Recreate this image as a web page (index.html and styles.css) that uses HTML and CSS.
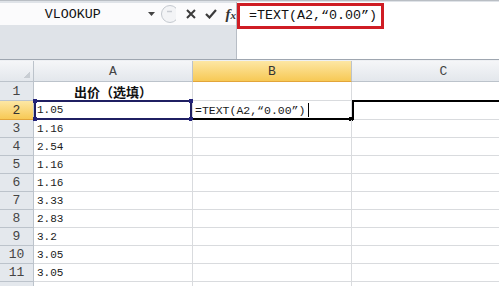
FILE: index.html
```html
<!doctype html>
<html lang="zh-CN">
  <head>
    <meta charset="UTF-8" />
    <meta name="viewport" content="width=device-width, initial-scale=1.0" />
    <title>TEXT 函数</title>
    <link rel="stylesheet" href="styles.css">
  </head>

  <body>
    <div class="window">
      <!-- Formula bar -->
      <div class="formula-bar">
        <div class="formula-left">
          <div class="name-row">
            <div class="name-box">VLOOKUP</div>
            <svg class="drop" width="8" height="5" viewBox="0 0 8 5"><path d="M0 0h7L3.5 4z" fill="#444"/></svg>
            <svg class="splitter" width="16" height="20" viewBox="0 0 16 20">
              <circle cx="10" cy="10" r="8.5" fill="#f3f4f6" stroke="#c3c8ce"/>
              <path d="M7 7.5h5" stroke="#c8ccd2" stroke-width="1.5"/>
            </svg>
            <svg class="icon" width="10" height="10" viewBox="0 0 10 10">
              <path d="M1 1l8 8M9 1l-8 8" stroke="#3b3b3b" stroke-width="2"/>
            </svg>
            <svg class="icon check" width="12" height="10" viewBox="0 0 12 10">
              <path d="M1 5l3.5 3.5L11 1" stroke="#3b3b3b" stroke-width="2.2" fill="none"/>
            </svg>
            <span class="fx"><i>f</i><i class="x">x</i></span>
          </div>
        </div>
        <div class="formula-input">
          <span class="formula-mark">=TEXT(A2,“0.00”)</span>
        </div>
      </div>
      <div class="spacer"></div>

      <!-- Sheet -->
      <div class="sheet">
        <div class="ch corner"></div>
        <div class="ch">A</div>
        <div class="ch picked">B</div>
        <div class="ch">C</div>

        <div class="rh">1</div>
        <div class="c title">出价（选填）</div>
        <div class="c"></div>
        <div class="c"></div>

        <div class="rh picked">2</div>
        <div class="c marked">1.05
          <span class="hd tl"></span><span class="hd tr"></span>
          <span class="hd bl"></span><span class="hd br"></span>
        </div>
        <div class="c editing">=TEXT(A2,“0.00”)<span class="caret"></span><span class="hd fill"></span></div>
        <div class="c edge"></div>

        <div class="rh">3</div><div class="c">1.16</div><div class="c"></div><div class="c"></div>
        <div class="rh">4</div><div class="c">2.54</div><div class="c"></div><div class="c"></div>
        <div class="rh">5</div><div class="c">1.16</div><div class="c"></div><div class="c"></div>
        <div class="rh">6</div><div class="c">1.16</div><div class="c"></div><div class="c"></div>
        <div class="rh">7</div><div class="c">3.33</div><div class="c"></div><div class="c"></div>
        <div class="rh">8</div><div class="c">2.83</div><div class="c"></div><div class="c"></div>
        <div class="rh">9</div><div class="c">3.2</div><div class="c"></div><div class="c"></div>
        <div class="rh">10</div><div class="c">3.05</div><div class="c"></div><div class="c"></div>
        <div class="rh">11</div><div class="c">3.05</div><div class="c"></div><div class="c"></div>
        <div class="rh"></div><div class="c"></div><div class="c"></div><div class="c"></div>
      </div>
    </div>
  </body>
</html>
```

FILE: styles.css
```css
body {
  margin: 0;
  background: #fff;
  font-family: "Liberation Mono", "DejaVu Sans Mono", monospace;
  color: #1a1a1a;
}

.window {
  width: 499px;
  height: 286px;
  overflow: hidden;
}

/* formula bar */
.formula-bar {
  display: flex;
  height: 58px;
  border-top: 1px solid #b9bec4;
  border-bottom: 1px solid #9ea6b0;
  background: #dfe3e8;
}

.formula-left {
  width: 236px;
  padding-top: 2px;
}

.name-row {
  display: flex;
  align-items: center;
  height: 22px;
  background: #fbfbfc;
}

.name-box {
  width: 146px;
  text-align: center;
  font-size: 13.33px;
  color: #111;
}

.drop {
  margin: 1px 0 0 2px;
}

.splitter {
  margin-left: 4px;
}

.icon {
  margin-left: 10px;
}

.check {
  margin-left: 9px;
}

.fx {
  margin-left: 9px;
  font-family: "Liberation Serif", serif;
  font-weight: bold;
  font-size: 15px;
  color: #333;
}

.fx .x {
  font-size: 11px;
}

.formula-input {
  flex: 1;
  margin-top: 1px;
  padding-top: 1px;
  background: #fff;
  border-left: 1px solid #b7bdc5;
}

.formula-mark {
  display: inline-block;
  height: 20px;
  line-height: 20px;
  padding: 0 4px 0 9px;
  border: 3px solid #cf1d24;
  font-size: 13.33px;
  color: #111;
}

.spacer {
  height: 1px;
  background: #eef0f3;
}

/* sheet grid */
.sheet {
  display: grid;
  grid-template-columns: 34px 159px 159px 184px;
  grid-template-rows: 21px 19px 19px;
  grid-auto-rows: 18px;
  width: 536px;
}

.sheet > div {
  box-sizing: border-box;
  display: flex;
  align-items: center;
  border-right: 1px solid #d9dbde;
  border-bottom: 1px solid #d9dbde;
}

.sheet .ch,
.sheet .rh {
  justify-content: center;
  font-size: 13px;
  color: #444;
  border-color: #bcc3cb;
}

.ch {
  background: linear-gradient(#f5f6f8, #e3e7ec);
}

.rh {
  background: #e4e8ed;
}

.corner {
  background:
    linear-gradient(135deg, transparent 50%, #c8cdd3 50%) no-repeat right 3px bottom 3px / 7px 7px,
    linear-gradient(#f5f6f8, #e3e7ec);
}

.sheet .picked {
  background: linear-gradient(#fde7a4, #f7c955);
  border-bottom-color: #e2a53a;
  color: #333;
}

.c {
  position: relative;
  padding-left: 3px;
  font-size: 11px;
}

.title {
  justify-content: center;
  padding-left: 0;
  font-family: "Noto Sans CJK SC", sans-serif;
  font-weight: bold;
  font-size: 13px;
  color: #111;
}

/* active cell and edit marks */
.marked::before {
  content: "";
  position: absolute;
  left: 0;
  top: -1px;
  right: 0;
  bottom: -1px;
  border: 2px solid #1f1f62;
}

.hd {
  position: absolute;
  width: 4px;
  height: 4px;
  background: #23237a;
}

.tl { left: -1px; top: -2px; }
.tr { right: -1px; top: -2px; }
.bl { left: -1px; bottom: -2px; }
.br { right: -1px; bottom: -2px; }

.editing {
  padding-left: 2px;
  font-size: 11.5px;
}

.editing::after {
  content: "";
  position: absolute;
  left: 0;
  right: 0;
  bottom: -1px;
  height: 2px;
  background: #000;
}

.caret {
  display: inline-block;
  width: 1px;
  height: 14px;
  margin-left: 3px;
  background: #000;
}

.hd.fill {
  right: -2px;
  bottom: -2px;
  background: #000;
}

.edge::before {
  content: "";
  position: absolute;
  left: 0;
  top: -1px;
  right: 0;
  bottom: -1px;
  border-top: 2px solid #000;
  border-left: 2px solid #000;
}
```
